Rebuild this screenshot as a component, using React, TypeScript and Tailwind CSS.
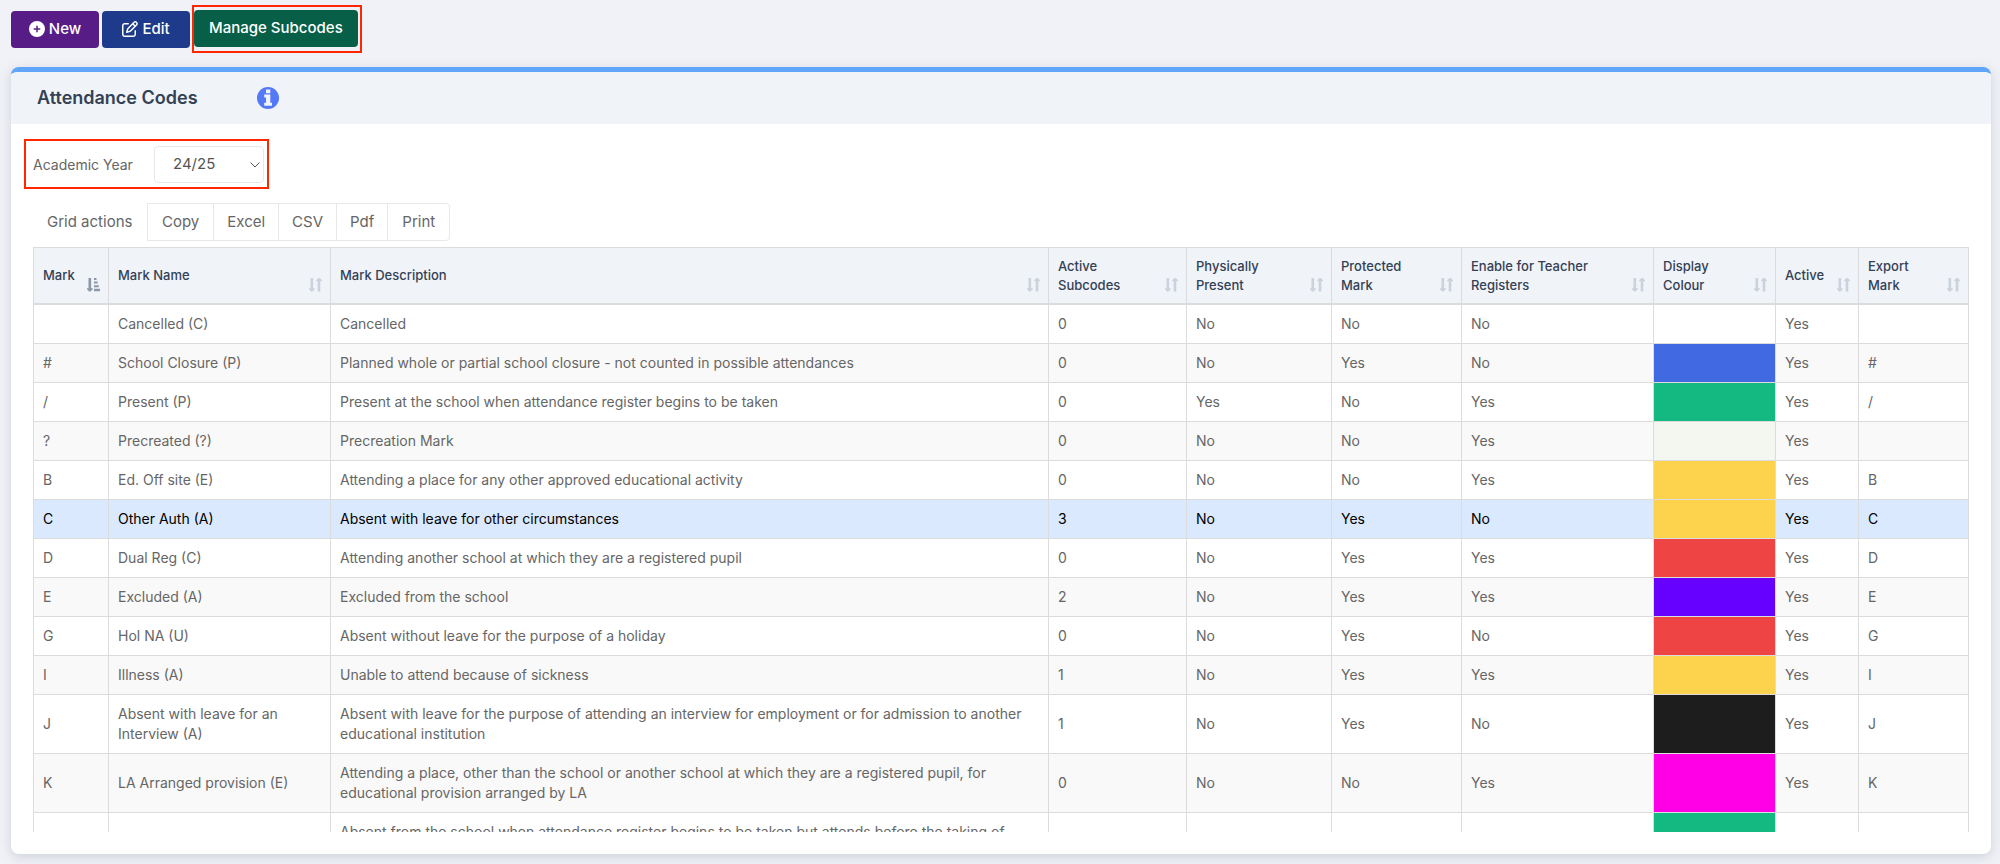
import React from 'react';
import { FaCirclePlus, FaRegPenToSquare } from 'react-icons/fa6';

const columns = [
  { label: 'Mark', width: 'w-[75px]' },
  { label: 'Mark Name', width: 'w-[222px]' },
  { label: 'Mark Description', width: '' },
  { label: 'Active Subcodes', width: 'w-[138px]' },
  { label: 'Physically Present', width: 'w-[145px]' },
  { label: 'Protected Mark', width: 'w-[130px]' },
  { label: 'Enable for Teacher Registers', width: 'w-[192px]' },
  { label: 'Display Colour', width: 'w-[122px]' },
  { label: 'Active', width: 'w-[83px]' },
  { label: 'Export Mark', width: 'w-[110px]' },
];

const rows = [
  { mark: '', name: 'Cancelled (C)', description: 'Cancelled', subcodes: '0', present: 'No', locked: 'No', teacher: 'No', colour: '', active: 'Yes', exportMark: '' },
  { mark: '#', name: 'School Closure (P)', description: 'Planned whole or partial school closure - not counted in possible attendances', subcodes: '0', present: 'No', locked: 'Yes', teacher: 'No', colour: 'bg-[#4169e1]', active: 'Yes', exportMark: '#' },
  { mark: '/', name: 'Present (P)', description: 'Present at the school when attendance register begins to be taken', subcodes: '0', present: 'Yes', locked: 'No', teacher: 'Yes', colour: 'bg-[#14b981]', active: 'Yes', exportMark: '/' },
  { mark: '?', name: 'Precreated (?)', description: 'Precreation Mark', subcodes: '0', present: 'No', locked: 'No', teacher: 'Yes', colour: 'bg-[#f4f6f0]', active: 'Yes', exportMark: '' },
  { mark: 'B', name: 'Ed. Off site (E)', description: 'Attending a place for any other approved educational activity', subcodes: '0', present: 'No', locked: 'No', teacher: 'Yes', colour: 'bg-[#fdd34d]', active: 'Yes', exportMark: 'B' },
  { mark: 'C', name: 'Other Auth (A)', description: 'Absent with leave for other circumstances', subcodes: '3', present: 'No', locked: 'Yes', teacher: 'No', colour: 'bg-[#fdd34d]', active: 'Yes', exportMark: 'C', selected: true },
  { mark: 'D', name: 'Dual Reg (C)', description: 'Attending another school at which they are a registered pupil', subcodes: '0', present: 'No', locked: 'Yes', teacher: 'Yes', colour: 'bg-[#ef4444]', active: 'Yes', exportMark: 'D' },
  { mark: 'E', name: 'Excluded (A)', description: 'Excluded from the school', subcodes: '2', present: 'No', locked: 'Yes', teacher: 'Yes', colour: 'bg-[#6600ff]', active: 'Yes', exportMark: 'E' },
  { mark: 'G', name: 'Hol NA (U)', description: 'Absent without leave for the purpose of a holiday', subcodes: '0', present: 'No', locked: 'Yes', teacher: 'No', colour: 'bg-[#ef4444]', active: 'Yes', exportMark: 'G' },
  { mark: 'I', name: 'Illness (A)', description: 'Unable to attend because of sickness', subcodes: '1', present: 'No', locked: 'Yes', teacher: 'Yes', colour: 'bg-[#fdd34d]', active: 'Yes', exportMark: 'I' },
  { mark: 'J', name: 'Absent with leave for an Interview (A)', description: 'Absent with leave for the purpose of attending an interview for employment or for admission to another educational institution', subcodes: '1', present: 'No', locked: 'Yes', teacher: 'No', colour: 'bg-[#1d1d1d]', active: 'Yes', exportMark: 'J' },
  { mark: 'K', name: 'LA Arranged provision (E)', description: 'Attending a place, other than the school or another school at which they are a registered pupil, for educational provision arranged by LA', subcodes: '0', present: 'No', locked: 'No', teacher: 'Yes', colour: 'bg-[#ff00e6]', active: 'Yes', exportMark: 'K' },
  { mark: '', name: '', description: 'Absent from the school when attendance register begins to be taken but attends before the taking of attendance has ended', subcodes: '', present: '', locked: '', teacher: '', colour: 'bg-[#14b981]', active: '', exportMark: '' },
];

const SortIcon = ({ sorted }: { sorted: boolean }) => (
  <svg
    viewBox="0 0 13 14"
    className={`absolute right-2 bottom-[11px] h-[14px] w-[13px] ${sorted ? 'text-[#8c98a8]' : 'text-[#cbd2db]'}`}
    fill="currentColor"
    aria-hidden="true"
  >
    <path d="M1.5 0h2.6v10.3h1.7v1L3.4 13.6H2.2L0 11.3v-1h1.5z" />
    {sorted ? (
      <path d="M7 0h2.5v2H7zM7 3.6h3.6v2H7zM7 7.2h4.8v2H7zM7 10.8h6v2.4H7z" />
    ) : (
      <path d="M8.7 13.6h2.6V3.3H13v-1L10.7 0H9.4L7.2 2.3v1h1.5z" />
    )}
  </svg>
);

const InfoIcon = () => (
  <svg viewBox="0 0 22 22" className="h-[22px] w-[22px]" aria-hidden="true">
    <circle cx="11" cy="11" r="11" fill="#5479f7" />
    <path d="M9 2.5h4.3v3.7H9zM7.2 7.6h6.1v8.2H15v3H7.2v-3H9v-5.2H7.2z" fill="#f0f3f8" />
  </svg>
);

const App = () => {
  return (
    <div className="min-h-screen bg-[#f1f2f7] pt-[5px] pr-[9px] pb-[10px] pl-[11px] font-['Inter',sans-serif] text-[#666]">
      <div className="flex items-center gap-[3px] text-[15px] text-white">
        <button className="flex h-[37px] w-[88px] items-center justify-center gap-1 rounded-[4px] bg-[#581c87] font-medium">
          <FaCirclePlus className="text-base" />
          New
        </button>
        <button className="flex h-[37px] w-[88px] items-center justify-center gap-1 rounded-[4px] bg-[#1e3a8a] font-medium">
          <FaRegPenToSquare className="text-base" />
          Edit
        </button>
        <div className="-ml-px flex border-2 border-[#ff2600] pt-[3px] pr-0.5 pb-1">
          <button className="h-[37px] rounded-[4px] bg-[#065f46] px-[15px] font-medium">Manage Subcodes</button>
        </div>
      </div>

      <div className="mt-[14px] overflow-hidden rounded-lg border-t-[5px] border-[#60a5fa] bg-white shadow-[0_3px_12px_rgba(100,110,130,0.25)]">
        <div className="flex h-[52px] items-center gap-[59px] bg-[#f0f3f8] pl-[26px]">
          <h1 className="text-lg font-semibold text-[#334155]">Attendance Codes</h1>
          <button aria-label="About attendance codes">
            <InfoIcon />
          </button>
        </div>

        <div className="px-[13px] pt-[15px] pb-[22px]">
          <div className="flex">
            <div className="flex items-center border-2 border-[#ff2600] pt-[5px] pr-[3px] pb-1 pl-[7px]">
              <label htmlFor="year" className="w-[121px] text-sm">Academic Year</label>
              <div className="relative flex">
                <select id="year" className="h-[37px] w-[110px] appearance-none rounded-[4px] border border-[#e5e7eb] pl-[18px] text-[15px] text-[#555]">
                  <option>24/25</option>
                </select>
                <svg viewBox="0 0 10 6" className="pointer-events-none absolute top-4 right-1 h-1.5 w-2.5" fill="none" stroke="#555">
                  <path d="M.5.5 5 5 9.5.5" />
                </svg>
              </div>
            </div>
          </div>

          <div className="mt-[14px] flex items-center pl-[23px]">
            <span className="w-[100px] text-[15px]">Grid actions</span>
            <div className="flex h-[38px] divide-x divide-[#e8e8e8] rounded-r-[4px] border border-[#e8e8e8] text-[15px]">
              <button className="px-[14px]">Copy</button>
              <button className="px-[13px]">Excel</button>
              <button className="px-[13px]">CSV</button>
              <button className="px-[13px]">Pdf</button>
              <button className="px-[14px]">Print</button>
            </div>
          </div>

          <div className="mt-1.5 mr-[9px] ml-[9px] h-[585px] overflow-hidden">
            <table className="w-full table-fixed border-separate border-spacing-0 border-t border-l border-[#dcdcdc] text-sm leading-5">
              <thead>
                <tr>
                  {columns.map((column, i) => (
                    <th
                      key={column.label}
                      className={`relative h-[57px] border-r border-b-2 border-[#dcdcdc] bg-[#f0f3f8] pr-[30px] pl-[9px] text-left text-[13px] leading-[19px] font-medium text-[#334155] ${column.width}`}
                    >
                      {column.label}
                      <SortIcon sorted={i === 0} />
                    </th>
                  ))}
                </tr>
              </thead>
              <tbody>
                {rows.map((row) => (
                  <tr
                    key={row.description}
                    className={row.selected ? 'bg-[#dbe9fe] text-black' : 'even:bg-[#f9f9f9]'}
                  >
                    <td className="border-r border-b border-[#dcdcdc] px-[9px] py-[9px]">{row.mark}</td>
                    <td className="border-r border-b border-[#dcdcdc] px-[9px] py-[9px]">{row.name}</td>
                    <td className="border-r border-b border-[#dcdcdc] px-[9px] py-[9px]">{row.description}</td>
                    <td className="border-r border-b border-[#dcdcdc] px-[9px] py-[9px]">{row.subcodes}</td>
                    <td className="border-r border-b border-[#dcdcdc] px-[9px] py-[9px]">{row.present}</td>
                    <td className="border-r border-b border-[#dcdcdc] px-[9px] py-[9px]">{row.locked}</td>
                    <td className="border-r border-b border-[#dcdcdc] px-[9px] py-[9px]">{row.teacher}</td>
                    <td className={`border-r border-b border-[#dcdcdc] ${row.colour}`}></td>
                    <td className="border-r border-b border-[#dcdcdc] px-[9px] py-[9px]">{row.active}</td>
                    <td className="border-r border-b border-[#dcdcdc] px-[9px] py-[9px]">{row.exportMark}</td>
                  </tr>
                ))}
              </tbody>
            </table>
          </div>
        </div>
      </div>
    </div>
  );
};

export default App;
